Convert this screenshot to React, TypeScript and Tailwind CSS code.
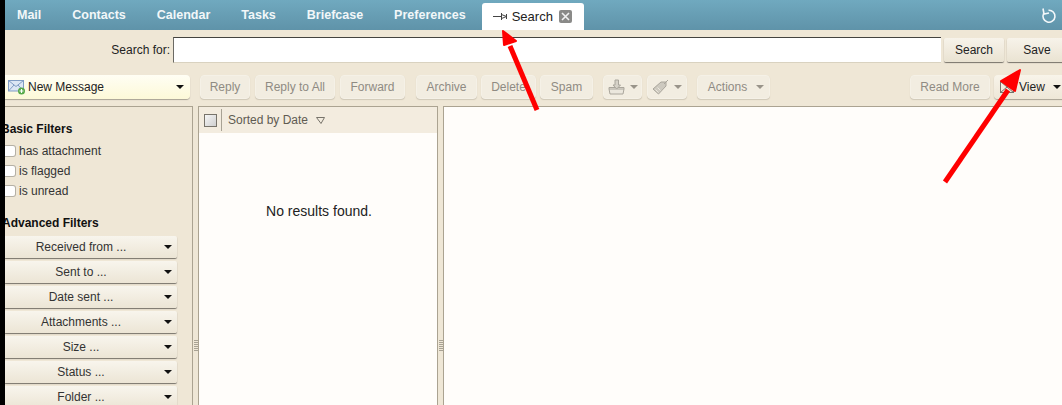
import React from 'react';

const tabs = ['Mail', 'Contacts', 'Calendar', 'Tasks', 'Briefcase', 'Preferences'];
const basicFilters = ['has attachment', 'is flagged', 'is unread'];
const advancedFilters = ['Received from ...', 'Sent to ...', 'Date sent ...', 'Attachments ...', 'Size ...', 'Status ...', 'Folder ...'];

const Caret: React.FC<{ muted?: boolean }> = ({ muted }) => (
  <span className={`inline-block h-0 w-0 border-x-[4px] border-t-[4px] border-x-transparent ${muted ? 'border-t-[#99948a]' : 'border-t-[#111]'}`} />
);

const ToolButton: React.FC<{ width: string; children: React.ReactNode }> = ({ width, children }) => (
  <div className={`flex h-[24px] shrink-0 items-center justify-center gap-[5px] rounded-[4px] border border-[#f5f1e7] bg-[#f2ede1] text-[12px] text-[#8f8b83] shadow-[0_1px_1px_#d0c9b8] ${width}`}>
    {children}
  </div>
);

const Grip: React.FC = () => (
  <div className="flex flex-col gap-[1px]">
    {[0, 1, 2, 3, 4, 5].map((i) => (
      <span key={i} className="h-px w-[4px] bg-[#a8a294]" />
    ))}
  </div>
);

const App: React.FC = () => {
  return (
    <div className="relative flex h-[405px] w-[1062px] overflow-hidden bg-[#efe7d6] font-['Liberation_Sans',Arial,sans-serif]">
      <div className="relative z-10 w-[5px] shrink-0 bg-black" />
      <div className="flex min-w-0 flex-1 flex-col">
        {/* tab bar */}
        <div className="flex h-[30px] shrink-0 items-center bg-gradient-to-b from-[#70a9bf] to-[#5f93a9] pl-[12px]">
          <div className="flex gap-[31px]">
            {tabs.map((tab) => (
              <span key={tab} className="text-[12.5px] font-bold text-[#f2f7f9]">
                {tab}
              </span>
            ))}
          </div>
          <div className="ml-[16px] flex h-[27px] w-[102px] shrink-0 items-center self-end rounded-t-[3px] bg-white pl-[11px] text-[13px] text-[#222]">
            <svg width="15" height="9" viewBox="0 0 15 9" className="mr-[4px]" fill="none" stroke="#444" strokeWidth="1">
              <path d="M0 4.5h8M8.5 1v7M8.5 2.5l5 2-5 2M13.5 2v5" />
            </svg>
            Search
            <span className="ml-[6px] flex h-[13px] w-[13px] items-center justify-center rounded-[2px] bg-[#8a8a88]">
              <svg width="9" height="9" viewBox="0 0 9 9" stroke="#f2f2f2" strokeWidth="1.6">
                <path d="M1 1l7 7M8 1l-7 7" />
              </svg>
            </span>
          </div>
          <svg width="16" height="17" viewBox="0 0 16 17" className="ml-auto mr-[5px] shrink-0" fill="none" stroke="#f4f8fa" strokeWidth="1.6">
            <path d="M7.5 3.2A6 6 0 1 1 2.6 6.5" />
            <path d="M2 1.5L3 7l5-1" />
          </svg>
        </div>

        {/* search row */}
        <div className="flex h-[33px] shrink-0 items-center pt-[7px]">
          <span className="ml-[105px] w-[60px] shrink-0 whitespace-nowrap text-right text-[12px] text-[#222]">Search for:</span>
          <div className="ml-[3px] h-[26px] w-[768px] shrink-0 border-t border-b border-l border-t-[#44433f] border-b-[#d9d2c0] border-l-[#6b6a64] bg-white" />
          <div className="ml-[3px] flex h-[24px] w-[60px] shrink-0 items-center justify-center rounded-[2px] bg-gradient-to-b from-[#f7f3ea] to-[#eae3d2] text-[12px] text-[#222] shadow-[0_1px_1px_#77736a]">
            Search
          </div>
          <div className="ml-[3px] flex h-[24px] w-[60px] shrink-0 items-center justify-center rounded-[2px] bg-gradient-to-b from-[#f7f3ea] to-[#eae3d2] text-[12px] text-[#222] shadow-[0_1px_1px_#77736a]">
            Save
          </div>
        </div>

        {/* toolbar */}
        <div className="mt-[12px] flex h-[24px] shrink-0 items-center">
          <div className="flex h-[24px] w-[185px] shrink-0 items-center rounded-r-[4px] bg-gradient-to-b from-[#fffef4] to-[#fdf9d8] pl-[3px] text-[12px] text-[#222] shadow-[0_1px_1px_#a8a294]">
            <svg width="18" height="16" viewBox="0 0 18 16" className="mr-[2px]">
              <rect x="0.5" y="1.5" width="15" height="10.5" fill="#dbe6f4" stroke="#7f9cc4" />
              <path d="M0.5 1.5l7.5 6 7.5-6M0.5 12l5.5-6M15.5 12l-5.5-6" fill="none" stroke="#7f9cc4" />
              <circle cx="13.5" cy="12" r="3.5" fill="#55a948" />
              <path d="M13.5 10v4M11.5 12h4" stroke="#fff" strokeWidth="1.2" />
            </svg>
            New Message
            <span className="ml-auto mr-[6px] flex"><Caret /></span>
          </div>
          <div className="ml-[10px] flex gap-[5px]">
            <ToolButton width="w-[50px]">Reply</ToolButton>
            <ToolButton width="w-[80px]">Reply to All</ToolButton>
            <ToolButton width="w-[65px]">Forward</ToolButton>
          </div>
          <div className="ml-[11px] flex gap-[4px]">
            <ToolButton width="w-[61px]">Archive</ToolButton>
            <ToolButton width="w-[55px]">Delete</ToolButton>
            <ToolButton width="w-[53px]">Spam</ToolButton>
          </div>
          <div className="ml-[10px] flex gap-[5px]">
            <ToolButton width="w-[39px]">
              <svg width="17" height="16" viewBox="0 0 17 16" fill="#ebe7dd" stroke="#aaa69c">
                <path d="M1 8.5h15v1.5l-1 5h-13l-1-5z" />
                <path d="M1 10h15" fill="none" />
                <path d="M7 1h3.5v5h2L8.7 10 5 6h2z" fill="#d6d2c8" />
              </svg>
              <Caret muted />
            </ToolButton>
            <ToolButton width="w-[40px]">
              <svg width="17" height="16" viewBox="0 0 17 16" fill="#cdc9bf" stroke="#aaa69c">
                <path d="M1 10L9 3l5 0 0 4-7.5 8z" />
                <path d="M3.5 10.5l3 3M5.5 8.5l3 3" fill="none" stroke="#ece8de" />
                <path d="M12 5l4-4" fill="none" />
              </svg>
              <Caret muted />
            </ToolButton>
          </div>
          <div className="ml-[10px]">
            <ToolButton width="w-[73px] pl-[5px]">
              Actions
              <span className="ml-[4px] flex"><Caret muted /></span>
            </ToolButton>
          </div>
          <div className="ml-[140px]">
            <ToolButton width="w-[80px]">Read More</ToolButton>
          </div>
          <div className="ml-[4px] flex h-[24px] w-[80px] shrink-0 items-center rounded-[4px] bg-gradient-to-b from-[#f8f4ea] to-[#eee7d7] pl-[6px] text-[12px] text-[#222] shadow-[0_1px_1px_#a8a294]">
            <svg width="14" height="12" viewBox="0 0 14 12" className="mr-[5px]" fill="none" stroke="#77736a">
              <rect x="0.5" y="0.5" width="13" height="11" />
              <path d="M0.5 0.5l13 11M13.5 0.5l-13 11" />
            </svg>
            View
            <span className="ml-[8px] flex"><Caret /></span>
          </div>
        </div>

        {/* panels */}
        <div className="mt-[7px] flex min-h-0 flex-1">
          <aside className="w-[188px] shrink-0 border-t border-r border-[#aba391] pt-[15px]">
            <h3 className="-ml-[4px] text-[12px] font-bold leading-[14px] text-[#111]">Basic Filters</h3>
            <div className="mt-[5px] flex flex-col">
              {basicFilters.map((f) => (
                <div key={f} className="flex h-[20px] items-center text-[12px] text-[#333]">
                  <span className="mr-[3px] h-[12px] w-[11px] rounded-r-[3px] border border-l-0 border-[#b5b0a5] bg-white" />
                  {f}
                </div>
              ))}
            </div>
            <h3 className="-ml-[3px] mt-[15px] text-[12px] font-bold leading-[14px] text-[#111]">Advanced Filters</h3>
            <div className="mt-[6px] flex w-[172px] flex-col gap-[3px]">
              {advancedFilters.map((f) => (
                <div key={f} className="relative flex h-[22px] shrink-0 items-center justify-center rounded-r-[2px] bg-gradient-to-b from-[#f8f5ed] to-[#ece5d5] pr-[20px] text-[12px] text-[#333] shadow-[0_1px_1px_#77736a]">
                  {f}
                  <span className="absolute right-[5px] top-[9px] flex"><Caret /></span>
                </div>
              ))}
            </div>
          </aside>
          <div className="flex w-[5px] shrink-0 items-center justify-center pt-[180px]">
            <Grip />
          </div>
          <section className="flex w-[240px] shrink-0 flex-col border-t border-x border-[#aba391] bg-[#fffdfa]">
            <div className="flex h-[26px] shrink-0 items-center bg-[#f3ecdf] pl-[5px]">
              <span className="h-[13px] w-[13px] border border-[#77736a] bg-gradient-to-br from-[#f6f6f6] to-[#cfcfcf]" />
              <span className="ml-[4px] h-[22px] w-px bg-[#a8a294]" />
              <span className="ml-[6px] text-[12px] text-[#5f5b52]">Sorted by Date</span>
              <svg width="9" height="7" viewBox="0 0 9 7" className="ml-[8px]" fill="none" stroke="#77736a">
                <path d="M0.5 0.5h8L5 6.5z" />
              </svg>
            </div>
            <p className="mt-[70px] pl-[2px] text-center text-[14px] leading-[16px] text-[#222]">No results found.</p>
          </section>
          <div className="flex w-[5px] shrink-0 items-center justify-center pt-[180px]">
            <Grip />
          </div>
          <section className="min-w-0 flex-1 border-t border-l border-[#aba391] bg-[#fffdfa]" />
        </div>
      </div>

      {/* annotation arrows */}
      <svg className="pointer-events-none absolute inset-0 z-20" width="1062" height="405" viewBox="0 0 1062 405">
        <path d="M537 110L510 46" stroke="#ff0000" strokeWidth="5" fill="none" />
        <path d="M503 31L516 41 504 45z" fill="#ff0000" stroke="#ff0000" strokeWidth="2" strokeLinejoin="round" />
        <path d="M945 182L1008 90" stroke="#ff0000" strokeWidth="5" fill="none" />
        <path d="M1020 70L1015 91 1001 81z" fill="#ff0000" stroke="#ff0000" strokeWidth="2" strokeLinejoin="round" />
      </svg>
    </div>
  );
};

export default App;
